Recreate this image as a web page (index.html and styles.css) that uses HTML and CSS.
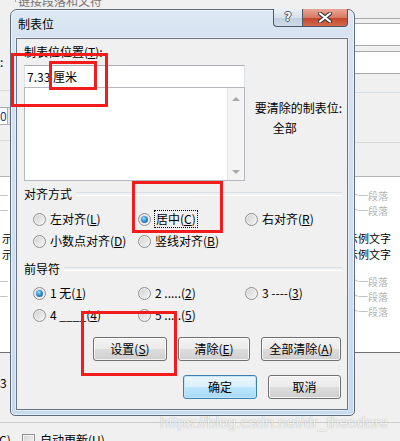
FILE: index.html
```html
<!DOCTYPE html>
<html lang="zh-CN">
<head>
  <meta charset="UTF-8">
  <title>制表位</title>
  <link rel="stylesheet" href="styles.css">
</head>
<body>
  <div class="screen">
    <!-- Word paragraph dialog behind -->
    <div class="backdrop">
      <div class="bd-top">
        <div class="bd-group"><span>链接段落和文符</span></div>
      </div>
      <div class="bd-middle">
        <div class="bd-left">
          <div class="bd-colon">:</div>
          <div class="bd-rule"></div>
          <div class="bd-combo"><span>0</span><i></i></div>
          <div class="bd-rule second"></div>
          <div class="bd-preview">
            <div class="pv faint">一</div>
            <div class="pv faint">一</div>
            <div class="pv dark first">示</div>
            <div class="pv dark">示</div>
            <div class="pv faint gap">一</div>
            <div class="pv faint">一</div>
          </div>
          <div class="bd-label">3 :</div>
        </div>
        <div class="bd-right">
          <div class="bd-line top"></div>
          <div class="bd-field"></div>
          <div class="bd-field"></div>
          <div class="bd-line blue"></div>
          <div class="bd-line grey"></div>
          <div class="bd-preview">
            <div class="pv faint">个一段落</div>
            <div class="pv faint">个一段落</div>
            <div class="pv dark first">示例文字</div>
            <div class="pv dark">示例文字</div>
            <div class="pv faint gap">个一段落</div>
            <div class="pv faint">个一段落</div>
            <div class="pv faint">个一段落</div>
          </div>
        </div>
      </div>
      <div class="bd-bottom">
        <div class="bd-line"></div>
        <div class="bd-auto">
          <span class="bd-c">(C)</span>
          <span class="check"></span>
          <span>自动更新(<u>U</u>)</span>
        </div>
      </div>
    </div>

    <!-- tab stops dialog -->
    <div class="dialog">
      <div class="titlebar">
        <div class="title">制表位</div>
        <div class="caption">
          <div class="cap help">?</div>
          <div class="cap close">
            <svg width="14" height="11" viewBox="0 0 14 11">
              <path d="M2 1.5 L12 9.5 M12 1.5 L2 9.5" stroke="#3a3a3a" stroke-width="4.2" stroke-linecap="round"/>
              <path d="M2 1.5 L12 9.5 M12 1.5 L2 9.5" stroke="#fff" stroke-width="2.2" stroke-linecap="round"/>
            </svg>
          </div>
        </div>
      </div>

      <div class="client">
        <div class="tab-row">
          <div class="tab-left">
            <div class="label">制表位位置(<u>T</u>):</div>
            <div class="textbox">7.33 厘米</div>
            <div class="listbox">
              <div class="scroll"><i class="up"></i><i class="down"></i></div>
            </div>
          </div>
          <div class="tab-right">
            <div>要清除的制表位:</div>
            <div class="indent">全部</div>
          </div>
        </div>

        <div class="section"><span>对齐方式</span></div>
        <div class="options">
          <div class="opt"><span class="radio"></span><span>左对齐(<u>L</u>)</span></div>
          <div class="opt"><span class="radio on"></span><span class="focus">居中(<u>C</u>)</span></div>
          <div class="opt"><span class="radio"></span><span>右对齐(<u>R</u>)</span></div>
          <div class="opt"><span class="radio"></span><span>小数点对齐(<u>D</u>)</span></div>
          <div class="opt"><span class="radio"></span><span>竖线对齐(<u>B</u>)</span></div>
        </div>

        <div class="section lead"><span>前导符</span></div>
        <div class="options leaders">
          <div class="opt"><span class="radio on"></span><span>1 无(<u>1</u>)</span></div>
          <div class="opt"><span class="radio"></span><span>2 .....(<u>2</u>)</span></div>
          <div class="opt"><span class="radio"></span><span>3 ----(<u>3</u>)</span></div>
          <div class="opt"><span class="radio"></span><span>4 ____(<u>4</u>)</span></div>
          <div class="opt"><span class="radio"></span><span>5 .....(<u>5</u>)</span></div>
        </div>

        <div class="btn-row">
          <button class="btn w74">设置(<u>S</u>)</button>
          <button class="btn w72">清除(<u>E</u>)</button>
          <button class="btn w80">全部清除(<u>A</u>)</button>
        </div>
        <div class="btn-row last">
          <button class="btn default w74">确定</button>
          <button class="btn w73">取消</button>
        </div>
      </div>
    </div>

    <!-- red annotation boxes drawn over the screenshot -->
    <div class="mark m-pos"></div>
    <div class="mark m-unit"></div>
    <div class="mark m-center"></div>
    <div class="mark m-set"></div>

    <div class="watermark">https://blog.csdn.net/dr_theodore</div>
  </div>
</body>
</html>
```

FILE: styles.css
```css
* {
  box-sizing: border-box;
}

body {
  margin: 0;
  background: #f0f0f0;
  font-family: "Noto Sans CJK SC", sans-serif;
  font-size: 12px;
  color: #000;
}

.screen {
  position: relative;
  width: 400px;
  height: 441px;
  overflow: hidden;
}

/* ---------- backdrop ---------- */

.backdrop {
  display: flex;
  flex-direction: column;
  height: 441px;
}

.bd-top {
  height: 9px;
  overflow: hidden;
  padding-left: 15px;
}

.bd-group {
  height: 9px;
  border-left: 1px solid #a9a9a9;
  padding-left: 2px;
  color: #777;
}

.bd-group span {
  display: block;
  margin-top: -7px;
  line-height: 16px;
}

.bd-middle {
  display: flex;
  justify-content: space-between;
  height: 407px;
}

.bd-left {
  width: 10px;
  overflow: hidden;
}

.bd-right {
  width: 45px;
  overflow: hidden;
}

.bd-colon {
  margin-top: 45px;
  line-height: 16px;
}

.bd-rule {
  margin-top: 20px;
  height: 1px;
  background: #d9d9d9;
}

.bd-rule.second {
  margin-top: 15px;
}

.bd-combo {
  display: flex;
  margin-top: 16px;
  height: 18px;
  background: #fff;
  border-top: 1px solid #abadb3;
  border-bottom: 1px solid #abadb3;
}

.bd-combo span {
  width: 7px;
  color: #1d3d7a;
  line-height: 16px;
  overflow: hidden;
}

.bd-combo i {
  width: 3px;
  border-left: 1px solid #abadb3;
  background: #e4e4e4;
}

.bd-line {
  height: 1px;
  background: #a8a8a8;
}

.bd-line.top {
  margin-top: 9px;
}

.bd-line.blue {
  margin-top: 18px;
  background: #d3dde7;
}

.bd-line.grey {
  margin-top: 49px;
  background: #d8d8d8;
}

.bd-field {
  margin-top: 4px;
  height: 23px;
  background: #fff;
  border-top: 1px solid #a8a8a8;
  border-bottom: 1px solid #a8a8a8;
}

.bd-field + .bd-field {
  margin-top: 5px;
}

.bd-preview {
  margin-top: 35px;
  height: 177px;
  padding-top: 11px;
  background: #fff;
  border-top: 1px solid #b4b4b4;
  border-bottom: 1px solid #707070;
  white-space: nowrap;
}

.bd-right .bd-preview {
  margin-top: 33px;
}

.pv {
  line-height: 15px;
}

.pv.faint {
  font-size: 10px;
  color: #b4b4b4;
}

.pv.dark {
  font-size: 11px;
  line-height: 16px;
}

.pv.first {
  margin-top: 12px;
}

.pv.gap {
  margin-top: 12px;
}

.bd-left .pv.faint {
  margin-left: -2px;
}

.bd-left .pv.dark {
  padding-left: 2px;
}

.bd-right .pv.faint {
  margin-left: -7px;
}

.bd-right .pv.dark {
  margin-left: -8px;
}

.bd-label {
  margin-top: 22px;
  line-height: 16px;
  white-space: nowrap;
}

.bd-bottom {
  height: 25px;
}

.bd-bottom .bd-line {
  margin-top: 6px;
  background: #cdcdcd;
}

.bd-auto {
  display: flex;
  align-items: center;
  margin-top: 9px;
  line-height: 16px;
  white-space: nowrap;
}

.bd-c {
  width: 27px;
  margin-left: -5px;
}

.check {
  width: 13px;
  height: 13px;
  margin-right: 5px;
  border: 1px solid #8e8f8f;
  background: linear-gradient(135deg, #d3d3d3, #f8f8f8);
  box-shadow: inset 0 0 0 1px #f4f4f4;
}

/* ---------- dialog window ---------- */

.dialog {
  position: absolute;
  left: 10px;
  top: 9px;
  width: 345px;
  height: 407px;
  display: flex;
  flex-direction: column;
  padding: 0 6px 5px 5px;
  border: 1px solid #5e6b7a;
  border-radius: 7px 7px 5px 5px;
  background: linear-gradient(#dfe9f5 0, #d5e2f1 28px, #c8daee 100%);
  box-shadow: inset 0 0 0 1px rgba(255, 255, 255, 0.55);
}

.titlebar {
  display: flex;
  justify-content: space-between;
  height: 28px;
}

.title {
  margin-top: 6px;
  padding-left: 2px;
  line-height: 16px;
}

.caption {
  display: flex;
  margin-top: -1px;
  height: 18px;
}

.cap {
  height: 18px;
  border: 1px solid #4d5969;
  border-top: none;
}

.help {
  width: 29px;
  border-right: none;
  border-radius: 0 0 0 4px;
  background: linear-gradient(#eaf0f6 0, #d8e2ec 50%, #c0cede 50%, #cfdbe8 100%);
  text-align: center;
  font-family: "DejaVu Sans", sans-serif;
  font-weight: bold;
  font-size: 12px;
  line-height: 17px;
  color: #fff;
  text-shadow: 1px 0 0 #46505c, -1px 0 0 #46505c, 0 1px 0 #46505c, 0 -1px 0 #46505c;
}

.close {
  width: 46px;
  border-radius: 0 0 4px 0;
  background: linear-gradient(#e9a594 0, #d97a64 50%, #c4432c 50%, #d3694c 100%);
  display: flex;
  align-items: center;
  justify-content: center;
}

.client {
  flex: 1;
  padding: 5px 5px 0 7px;
  border: 1px solid #6a7686;
  background: #f0f0f0;
  box-shadow: 0 0 0 1px rgba(255, 255, 255, 0.45);
}

.tab-row {
  display: flex;
}

.tab-left {
  width: 221px;
}

.label {
  line-height: 16px;
}

.textbox {
  margin-top: 5px;
  height: 23px;
  padding-left: 2px;
  line-height: 21px;
  background: #fff;
  border: 1px solid #dbdfe6;
  border-top-color: #abadb3;
}

.listbox {
  display: flex;
  justify-content: flex-end;
  margin-top: -1px;
  height: 94px;
  background: #fff;
  border: 1px solid #b5b8bf;
}

.scroll {
  width: 17px;
  display: flex;
  flex-direction: column;
  justify-content: space-between;
  padding: 9px 0 6px;
  background: #f4f4f4;
  border-left: 1px solid #e6e6e6;
}

.scroll i {
  width: 0;
  height: 0;
  margin: 0 auto;
  border-left: 4px solid transparent;
  border-right: 4px solid transparent;
}

.scroll .up {
  border-bottom: 4px solid #a8a8a8;
}

.scroll .down {
  border-top: 4px solid #a8a8a8;
}

.tab-right {
  margin-left: 10px;
  padding-top: 54px;
  line-height: 20px;
  white-space: nowrap;
}

.indent {
  padding-left: 18px;
}

.section {
  display: flex;
  margin-top: 5px;
  height: 16px;
  line-height: 16px;
}

.section::after {
  content: "";
  flex: 1;
  height: 2px;
  margin: 6px 0 0 4px;
  border-top: 1px solid #d5dfe5;
  border-bottom: 1px solid #fff;
}

.section.lead {
  margin-top: 9px;
}

.options {
  display: grid;
  grid-template-columns: 105px 107px 1fr;
  grid-auto-rows: 22px;
  margin: 6px 0 0 9px;
}

.options.leaders {
  margin-top: 5px;
}

.opt {
  display: flex;
  align-items: center;
  white-space: nowrap;
  line-height: 16px;
}

.radio {
  position: relative;
  flex: none;
  width: 13px;
  height: 13px;
  margin-right: 4px;
  border: 1px solid #8e8f8f;
  border-radius: 50%;
  background: linear-gradient(135deg, #cfcfcf, #f8f8f8);
  box-shadow: inset 0 0 0 1px #f2f2f2;
}

.radio.on::after {
  content: "";
  position: absolute;
  left: 2px;
  top: 2px;
  width: 7px;
  height: 7px;
  border-radius: 50%;
  background: radial-gradient(circle at 40% 35%, #9be0ff 0, #3b9ad9 40%, #0f4d8c 100%);
}

.focus {
  padding: 0 1px;
  outline: 1px dotted #000;
}

.btn-row {
  display: flex;
  justify-content: flex-end;
  gap: 11px;
  margin-top: 11px;
  padding-right: 1px;
}

.btn-row.last {
  margin-top: 14px;
}

.btn {
  height: 24px;
  padding: 0;
  border: 1px solid #707070;
  border-radius: 3px;
  background: linear-gradient(#f2f2f2 0, #ebebeb 50%, #dddddd 50%, #cfcfcf 100%);
  box-shadow: inset 0 0 0 1px rgba(255, 255, 255, 0.75);
  font-family: "Noto Sans CJK SC", sans-serif;
  font-size: 12px;
  line-height: 20px;
  color: #000;
}

.btn.default {
  border-color: #3c7fb1;
  background: linear-gradient(#eaf6fd 0, #d9f0fc 50%, #bee6fd 50%, #a7d9f5 100%);
  box-shadow: inset 0 0 0 1px #c4e5f6;
}

.w72 { width: 72px; }
.w73 { width: 73px; }
.w74 { width: 74px; }
.w80 { width: 80px; }

/* ---------- overlays ---------- */

.mark {
  position: absolute;
  border: 3px solid #f21c1c;
}

.m-pos {
  left: 11px;
  top: 53px;
  width: 97px;
  height: 54px;
}

.m-unit {
  left: 49px;
  top: 61px;
  width: 48px;
  height: 29px;
}

.m-center {
  left: 132px;
  top: 181px;
  width: 91px;
  height: 52px;
}

.m-set {
  left: 81px;
  top: 311px;
  width: 96px;
  height: 65px;
}

.watermark {
  position: absolute;
  left: 160px;
  top: 413px;
  font-family: "Liberation Sans", sans-serif;
  font-size: 15.6px;
  line-height: 20px;
  color: rgba(255, 255, 255, 0.85);
  text-shadow: 0 0 1px rgba(0, 0, 0, 0.35);
  white-space: nowrap;
}
```
